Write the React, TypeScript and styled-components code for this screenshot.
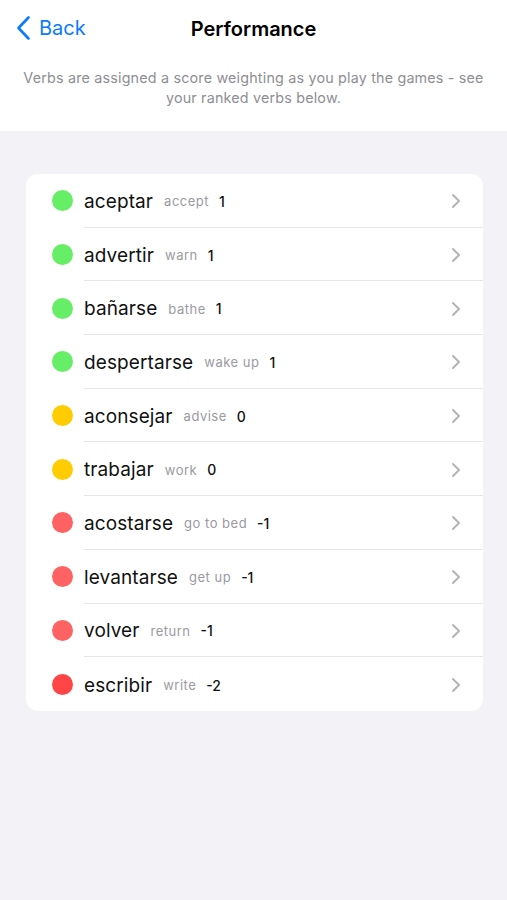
import { FC } from "react";
import styled, { createGlobalStyle } from "styled-components";

const GlobalStyle = createGlobalStyle`
   html, body {
      margin: 0;
      padding: 0;
      background: #f2f2f7;
      font-family: Inter, "Liberation Sans", Arial, sans-serif;
      -webkit-font-smoothing: antialiased;
   }
`;

const Page = styled.div`
   min-height: 900px;
   background: #f2f2f7;
   display: flex;
   flex-direction: column;
`;

const Header = styled.header`
   background: #ffffff;
   padding-bottom: 23px;
`;

const NavBar = styled.div`
   position: relative;
   height: 57px;
   display: flex;
   align-items: center;
   justify-content: center;
`;

const BackButton = styled.button`
   position: absolute;
   left: 16px;
   top: 15px;
   display: flex;
   align-items: center;
   gap: 8px;
   background: transparent;
   border: none;
   padding: 0;
   color: #0a7aff;
   font-family: inherit;
   font-size: 20px;
   cursor: pointer;
   svg {
      width: 15px;
      height: 26px;
   }
`;

const Title = styled.h1`
   margin: 0;
   font-size: 20px;
   font-weight: 600;
   color: #000;
`;

const Intro = styled.p`
   margin: 11px auto 0;
   max-width: 470px;
   text-align: center;
   color: #8e8e93;
   font-size: 14.3px;
   line-height: 20px;
   letter-spacing: 0.2px;
`;

const Card = styled.ul`
   list-style: none;
   margin: 43px 24px 0 26px;
   padding: 0;
   background: #fff;
   border-radius: 12px;
   overflow: hidden;
`;

const Row = styled.li`
   display: flex;
   align-items: center;
   height: 53.7px;
   padding-left: 26px;
`;

const Dot = styled.span<{ $color: string }>`
   width: 21px;
   height: 21px;
   border-radius: 50%;
   background: ${(p) => p.$color};
   flex-shrink: 0;
   margin-right: 11px;
`;

const RowBody = styled.div<{ $last: boolean }>`
   flex: 1;
   height: 100%;
   display: flex;
   align-items: center;
   border-bottom: ${(p) => (p.$last ? "none" : "1px solid #e5e5ea")};
   padding: 2px 22px 0 0;
   box-sizing: border-box;
`;

const Verb = styled.span`
   font-size: 19px;
   color: #111;
   letter-spacing: 0.1px;
   margin-right: 11px;
`;

const Meaning = styled.span`
   font-size: 13px;
   color: #9a9a9f;
   letter-spacing: 0.5px;
   margin-right: 10px;
`;

const Score = styled.span`
   font-size: 14px;
   font-weight: 500;
   color: #111;
`;

const Chevron = styled.svg`
   margin-left: auto;
   width: 10px;
   height: 16px;
`;

interface IVerb {
   verb: string;
   meaning: string;
   score: number;
}

const verbs: IVerb[] = [
   { verb: "aceptar", meaning: "accept", score: 1 },
   { verb: "advertir", meaning: "warn", score: 1 },
   { verb: "bañarse", meaning: "bathe", score: 1 },
   { verb: "despertarse", meaning: "wake up", score: 1 },
   { verb: "aconsejar", meaning: "advise", score: 0 },
   { verb: "trabajar", meaning: "work", score: 0 },
   { verb: "acostarse", meaning: "go to bed", score: -1 },
   { verb: "levantarse", meaning: "get up", score: -1 },
   { verb: "volver", meaning: "return", score: -1 },
   { verb: "escribir", meaning: "write", score: -2 },
];

const scoreColor = (score: number) => {
   if (score > 0) return "#66ee66";
   if (score === 0) return "#ffcc00";
   if (score === -1) return "#ff6262";
   return "#ff4545";
};

const VerbRow: FC<{ item: IVerb; last: boolean }> = ({ item, last }) => (
   <Row>
      <Dot $color={scoreColor(item.score)} />
      <RowBody $last={last}>
         <Verb>{item.verb}</Verb>
         <Meaning>{item.meaning}</Meaning>
         <Score>{item.score}</Score>
         <Chevron viewBox="0 0 10 16">
            <path
               d="M2 2l6 6-6 6"
               fill="none"
               stroke="#b4b4b8"
               strokeWidth="2"
               strokeLinecap="round"
               strokeLinejoin="round"
            />
         </Chevron>
      </RowBody>
   </Row>
);

const App: FC = () => {
   return (
      <Page>
         <GlobalStyle />
         <Header>
            <NavBar>
               <BackButton>
                  <svg viewBox="0 0 15 26">
                     <path
                        d="M12.5 2.5L2.5 13l10 10.5"
                        fill="none"
                        stroke="#0a7aff"
                        strokeWidth="2.6"
                        strokeLinecap="round"
                        strokeLinejoin="round"
                     />
                  </svg>
                  Back
               </BackButton>
               <Title>Performance</Title>
            </NavBar>
            <Intro>
               Verbs are assigned a score weighting as you play the games - see
               your ranked verbs below.
            </Intro>
         </Header>
         <Card>
            {verbs.map((v, i) => (
               <VerbRow key={v.verb} item={v} last={i === verbs.length - 1} />
            ))}
         </Card>
      </Page>
   );
};

export default App;
